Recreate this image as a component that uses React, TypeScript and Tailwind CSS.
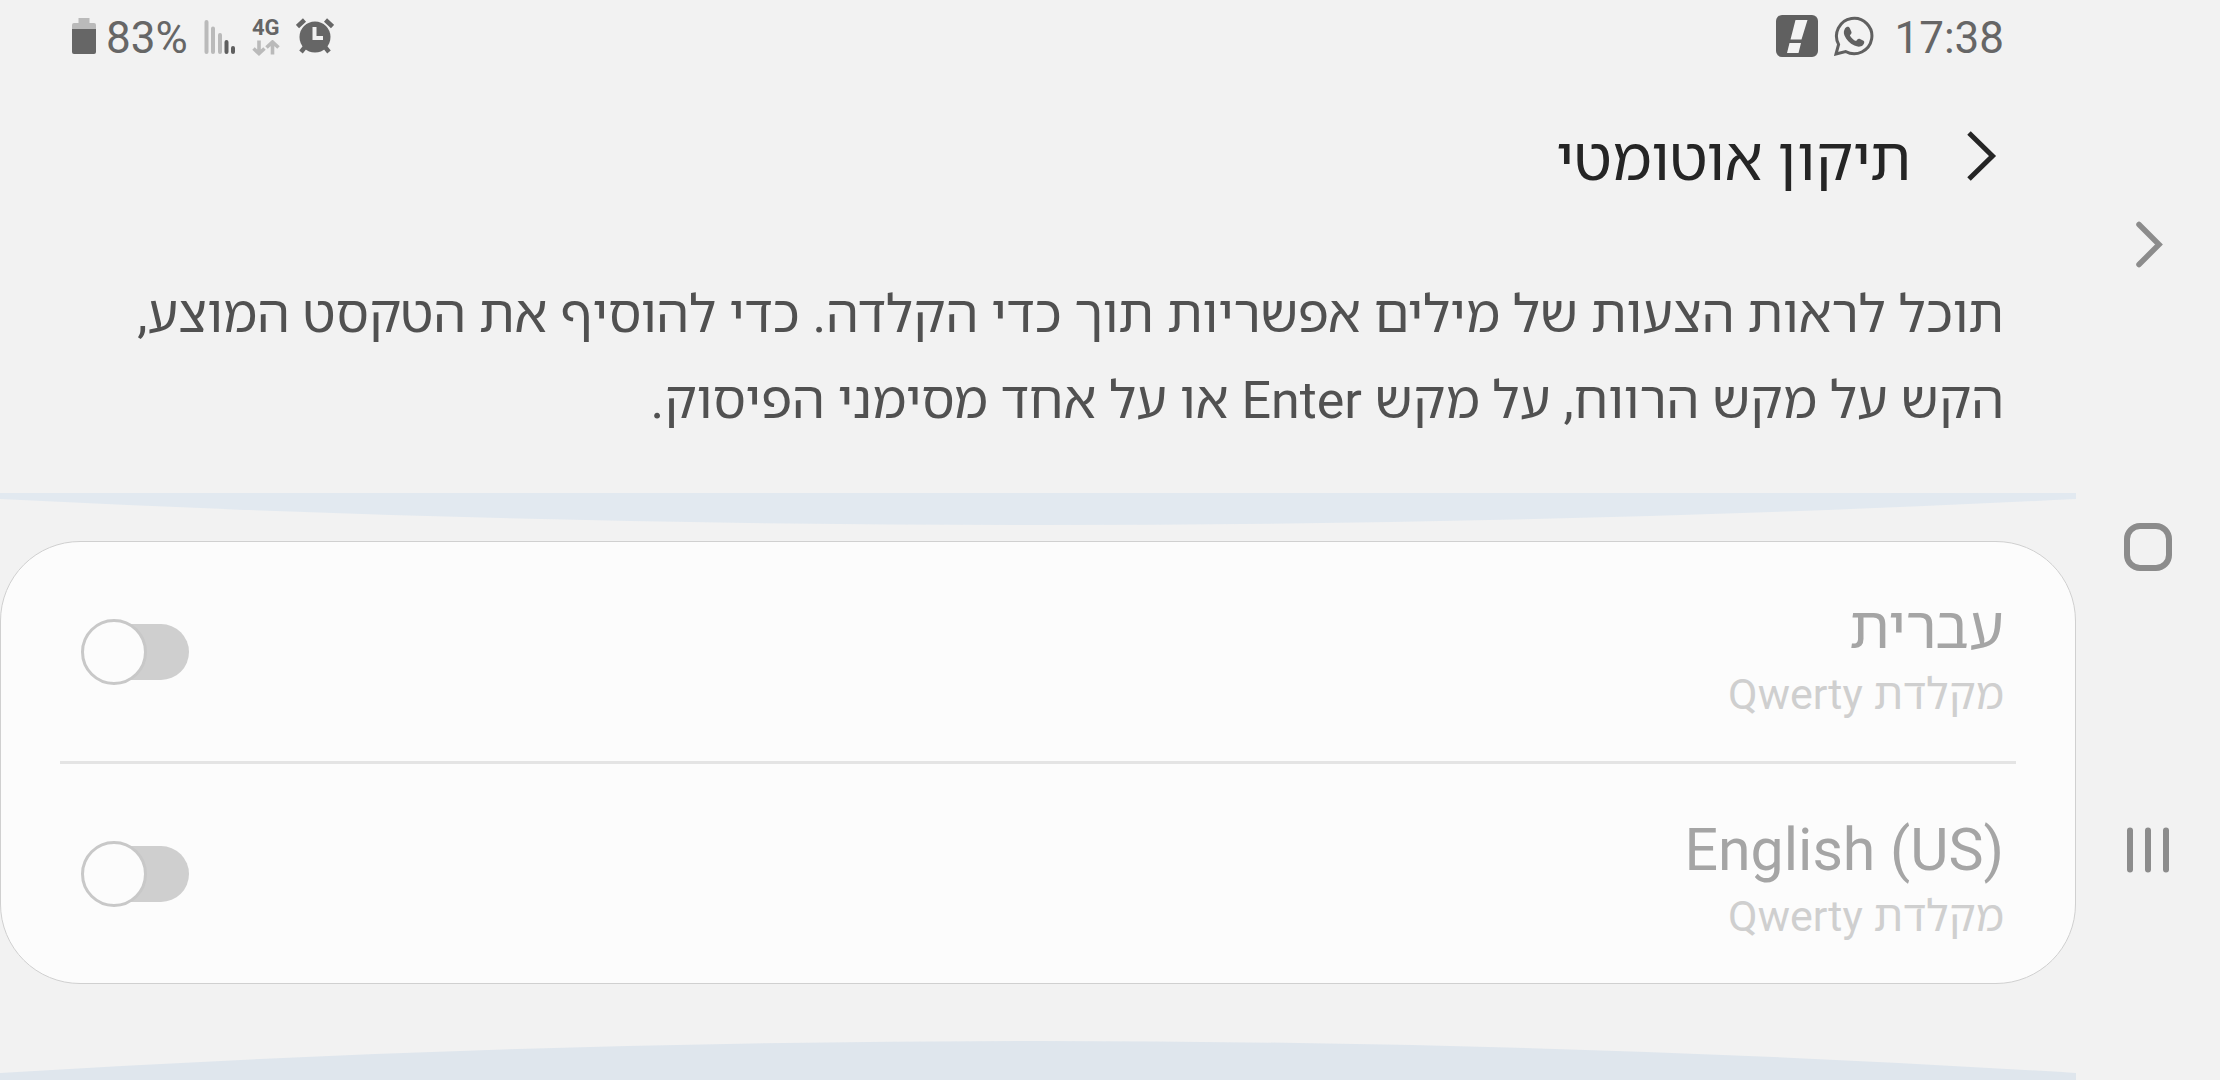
import React from "react";

const languages = [
  { id: "he", name: "עברית", layout: "מקלדת Qwerty" },
  { id: "en", name: "English (US)", layout: "מקלדת Qwerty" },
];

function BatteryIcon() {
  return (
    <svg className="h-9 w-6" viewBox="0 0 24 36" aria-hidden="true">
      <path d="M6.500 0h11v5h4.500a2 2 0 0 1 2 2v5H0V7a2 2 0 0 1 2-2h4.500z" fill="#bababa" />
      <path d="M0 11h24v23a2 2 0 0 1-2 2H2a2 2 0 0 1-2-2z" fill="#666" />
    </svg>
  );
}

function SignalIcon() {
  return (
    <svg className="h-9 w-8" viewBox="0 0 32 36" aria-hidden="true" strokeWidth="4" strokeLinecap="round">
      <path d="M2.500 4v30M9 10.500V34M16 17v17" stroke="#bababa" />
      <path d="M22.500 24v10M29 30v4" stroke="#5f5f5f" />
    </svg>
  );
}

function DataArrows() {
  return (
    <svg className="h-4 w-7" viewBox="0 0 28 16" aria-hidden="true" fill="none" stroke="#bababa" strokeWidth="3.600">
      <path d="M7 0.500v13M1.500 8.500L7 13.500l5.500-5M20.500 14.500v-12M14.500 7.500l6-5.500 6 5.500" />
    </svg>
  );
}

function AlarmIcon() {
  return (
    <svg className="h-9 w-[38px]" viewBox="0 0 38 36" aria-hidden="true">
      <circle cx="19" cy="19" r="15.500" fill="#666" />
      <path d="M1.500 8.500L8.500 2M36.500 8.500L29.500 2" stroke="#666" strokeWidth="4.500" />
      <path d="M9 29l-4 5M29 29l4 5" stroke="#666" strokeWidth="4.500" />
      <path d="M18.500 9v11H27" fill="none" stroke="#f2f2f2" strokeWidth="4" />
    </svg>
  );
}

function AlertIcon() {
  return (
    <svg className="h-[42px] w-[42px]" viewBox="0 0 42 42" aria-hidden="true">
      <rect width="42" height="42" rx="6" fill="#606060" />
      <path d="M19.500 5H31.500L25.500 24.500H14.500zM13.500 28H25L22.500 38H11z" fill="#f4f4f4" />
    </svg>
  );
}

function WhatsappIcon() {
  return (
    <svg className="h-10 w-10" viewBox="0 0 40 40" aria-hidden="true">
      <path
        d="M2 38l2.600-9.600A17.700 17.700 0 1 1 11.600 35.500z"
        fill="none"
        stroke="#606060"
        strokeWidth="3"
      />
      <path
        d="M11 12.500c1.500-2.400 3.800-2.300 4.700-.5l1.700 3.800c.5 1.300-.2 2-1.500 3.600 1.400 2.600 3.500 4.400 6.200 5.700 1.600-2.100 2.200-2.800 3.400-2.300l4 2c1.300.7.900 3.200-.7 4.500-2.200 1.900-5 1.800-8.400.3-4.700-2.200-8.200-5.600-9.900-10-1-2.600-.8-5 .5-7.100z"
        fill="#606060"
      />
    </svg>
  );
}

function StatusBar() {
  return (
    <div className="flex h-[72px] items-center justify-between px-[72px] text-[44px] leading-none text-[#666]" dir="ltr">
      <div className="flex items-center">
        <BatteryIcon />
        <span className="mr-4 ml-2.5 pt-1">83%</span>
        <SignalIcon />
        <span className="mx-4 flex flex-col items-center gap-1 pt-1">
          <span className="text-[22px] leading-4 font-bold">4G</span>
          <DataArrows />
        </span>
        <AlarmIcon />
      </div>
      <div className="flex items-center">
        <AlertIcon />
        <span className="mr-5 ml-4">
          <WhatsappIcon />
        </span>
        <time className="pt-1">17:38</time>
      </div>
    </div>
  );
}

function Toggle({ id }: { id: string }) {
  return (
    <span className="relative flex h-[66px] w-[108px] items-center" dir="ltr">
      <input
        id={id}
        type="checkbox"
        role="switch"
        className="peer absolute inset-0 z-10 m-0 h-full w-full cursor-pointer appearance-none"
      />
      <span className="ml-2 h-14 flex-1 rounded-full bg-[#cfcfcf]" />
      <span className="absolute left-0 h-[66px] w-[66px] rounded-full border-3 border-[#c8c8c8] bg-[#fcfcfc] peer-checked:left-auto peer-checked:right-0" />
    </span>
  );
}

function NavBar() {
  return (
    <nav className="flex w-36 shrink-0 flex-col items-center justify-between pt-[217px] pb-[203px]" dir="ltr">
      <button aria-label="חזרה" className="h-[54px] w-12">
        <svg className="h-full w-full" viewBox="0 0 48 54" fill="none" stroke="#8c8c8c" strokeWidth="5.500" strokeLinecap="round">
          <path d="M15 7.500L35 27.500 15 47.500" />
        </svg>
      </button>
      <button aria-label="בית" className="h-12 w-12">
        <svg className="h-full w-full" viewBox="0 0 48 48" fill="none" stroke="#8c8c8c" strokeWidth="6">
          <rect x="3" y="3" width="42" height="42" rx="13" />
        </svg>
      </button>
      <button aria-label="יישומים אחרונים" className="h-[54px] w-12">
        <svg className="h-full w-full" viewBox="0 0 48 54" stroke="#8c8c8c" strokeWidth="6" strokeLinecap="round">
          <path d="M6 7.500v39M24 7.500v39M42 7.500v39" />
        </svg>
      </button>
    </nav>
  );
}

export default function App() {
  return (
    <div className="flex min-h-screen bg-[#f2f2f2] font-['Roboto','Noto_Sans_Hebrew','Open_Sans','Noto_Sans',sans-serif]">
      <main className="flex min-w-0 flex-1 flex-col" dir="rtl" lang="he">
        <StatusBar />
        <header className="flex h-[172px] items-start gap-[54px] pt-10 pr-[75px]">
          <button aria-label="חזרה" className="mt-4 h-14 w-9">
            <svg className="h-full w-full" viewBox="0 0 36 56" fill="none" stroke="#252525" strokeWidth="5">
              <path d="M4 5L27.500 28 4 51" />
            </svg>
          </button>
          <h1 className="pt-1 text-[60px] leading-[88px] text-[#252525]">תיקון אוטומטי</h1>
        </header>
        <p className="px-[72px] pt-7 pb-[49px] text-[52px] leading-[86px] text-[#515151]">
          תוכל לראות הצעות של מילים אפשריות תוך כדי הקלדה. כדי להוסיף את הטקסט המוצע, הקש על מקש הרווח, על מקש Enter או על אחד מסימני הפיסוק.
        </p>
        <svg className="h-8 w-full" viewBox="0 0 2076 32" preserveAspectRatio="none" aria-hidden="true">
          <path d="M0 0H2076V6Q1557 32 1038 32T0 6z" fill="#e2e9f0" />
        </svg>
        <ul className="mt-4 rounded-[80px] border border-[#d0d0d0] bg-[#fcfcfc]">
          {languages.map((item, index) => (
            <li key={item.id}>
              {index > 0 && <hr className="mx-[59px] border-t-3 border-[#e4e4e4]" />}
              <div className="flex h-[219px] items-center justify-between pr-[71px] pl-20">
                <label htmlFor={item.id} className="flex flex-col pt-3">
                  <bdi className="text-[59px] leading-[72px] text-[#a5a5a5]">{item.name}</bdi>
                  <span className="text-[43px] leading-[60px] text-[#cfcfcf]">{item.layout}</span>
                </label>
                <Toggle id={item.id} />
              </div>
            </li>
          ))}
        </ul>
        <svg className="mt-14 min-h-10 w-full flex-1" viewBox="0 0 2076 40" preserveAspectRatio="none" aria-hidden="true">
          <path d="M0 33Q519 1 1038 1T2076 33V40H0z" fill="#dfe6ed" />
        </svg>
      </main>
      <NavBar />
    </div>
  );
}
